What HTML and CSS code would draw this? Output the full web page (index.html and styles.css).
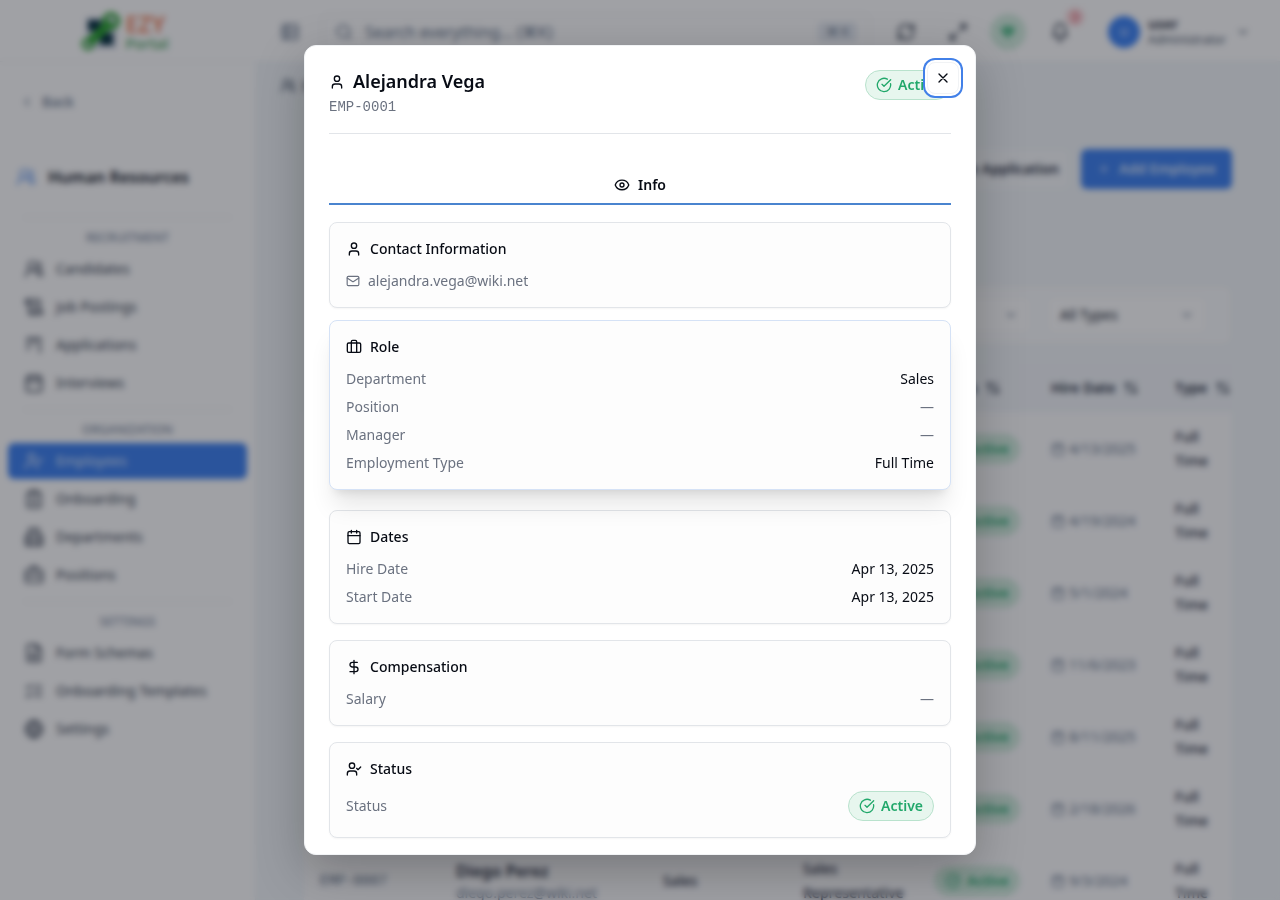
FILE: index.html
```html
<!DOCTYPE html>
<html lang="en">
<head>
<meta charset="utf-8">
<title>EZY Portal – Employees</title>
<link rel="stylesheet" href="styles.css">
</head>
<body>
<svg class="sprite" aria-hidden="true">
  <symbol id="user" viewBox="0 0 24 24"><circle cx="12" cy="7" r="4"/><path d="M19 21v-2a4 4 0 0 0-4-4H9a4 4 0 0 0-4 4v2"/></symbol>
  <symbol id="users" viewBox="0 0 24 24"><circle cx="10" cy="8" r="5"/><path d="M18 21a8 8 0 0 0-16 0"/><path d="M22 20c0-3.370-2-6.500-4-8a5 5 0 0 0-.450-8.300"/></symbol>
  <symbol id="user-check" viewBox="0 0 24 24"><circle cx="9" cy="7" r="4"/><path d="M16 21v-2a4 4 0 0 0-4-4H6a4 4 0 0 0-4 4v2"/><path d="m16 11 2 2 4-4"/></symbol>
  <symbol id="scroll" viewBox="0 0 24 24"><path d="M15 12h-5M15 8h-5M19 17V5a2 2 0 0 0-2-2H4"/><path d="M8 21h12a2 2 0 0 0 2-2v-1a1 1 0 0 0-1-1H11a1 1 0 0 0-1 1v1a2 2 0 1 1-4 0V5a2 2 0 1 0-4 0v2a1 1 0 0 0 1 1h3"/></symbol>
  <symbol id="kanban" viewBox="0 0 24 24"><path d="M4 4h16M5 4v14M12 4v8M19 4v17"/></symbol>
  <symbol id="calendar" viewBox="0 0 24 24"><path d="M8 2v4M16 2v4M3 10h18"/><rect x="3" y="4" width="18" height="18" rx="2"/></symbol>
  <symbol id="clipboard" viewBox="0 0 24 24"><rect x="8" y="2" width="8" height="4" rx="1"/><path d="M16 4h2a2 2 0 0 1 2 2v14a2 2 0 0 1-2 2H6a2 2 0 0 1-2-2V6a2 2 0 0 1 2-2h2M9 12h6M9 16h6"/></symbol>
  <symbol id="building" viewBox="0 0 24 24"><path d="M6 22V4a2 2 0 0 1 2-2h8a2 2 0 0 1 2 2v18zM6 10H4a2 2 0 0 0-2 2v8a2 2 0 0 0 2 2h16a2 2 0 0 0 2-2v-8a2 2 0 0 0-2-2h-2M10 6h4M10 10h4M10 14h4M10 18h4"/></symbol>
  <symbol id="case" viewBox="0 0 24 24"><path d="M16 6V4a2 2 0 0 0-2-2h-4a2 2 0 0 0-2 2v2M2 13h20M12 12v2"/><rect x="2" y="6" width="20" height="15" rx="2"/></symbol>
  <symbol id="luggage" viewBox="0 0 24 24"><path d="M16 20V4a2 2 0 0 0-2-2h-4a2 2 0 0 0-2 2v16"/><rect x="2" y="6" width="20" height="14" rx="2"/></symbol>
  <symbol id="file" viewBox="0 0 24 24"><path d="M15 2H6a2 2 0 0 0-2 2v16a2 2 0 0 0 2 2h12a2 2 0 0 0 2-2V7zM14 2v5h6M8 13h8M8 17h8"/></symbol>
  <symbol id="checks" viewBox="0 0 24 24"><path d="m3 17 2 2 4-4M3 7l2 2 4-4M13 6h8M13 12h8M13 18h8"/></symbol>
  <symbol id="globe" viewBox="0 0 24 24"><circle cx="12" cy="12" r="10"/><path d="M12 2a14 14 0 0 0 0 20 14 14 0 0 0 0-20M2 12h20"/></symbol>
  <symbol id="left" viewBox="0 0 24 24"><path d="m15 18-6-6 6-6"/></symbol>
  <symbol id="down" viewBox="0 0 24 24"><path d="m6 9 6 6 6-6"/></symbol>
  <symbol id="panel" viewBox="0 0 24 24"><rect x="3" y="3" width="18" height="18" rx="2"/><path d="M9 3v18M3 9h18M3 15h18"/></symbol>
  <symbol id="search" viewBox="0 0 24 24"><circle cx="11" cy="11" r="8"/><path d="m21 21-4-4"/></symbol>
  <symbol id="refresh" viewBox="0 0 24 24"><path d="M3 12a9 9 0 0 1 9-9 10 10 0 0 1 7 3l2 2M21 3v5h-5M21 12a9 9 0 0 1-9 9 10 10 0 0 1-7-3l-2-2M8 16H3v5"/></symbol>
  <symbol id="expand" viewBox="0 0 24 24"><path d="M15 3h6v6M9 21H3v-6M21 3l-7 7M3 21l7-7"/></symbol>
  <symbol id="heart" viewBox="0 0 24 24"><path fill="currentColor" d="M12 20 4 12a5 5 0 0 1 8-6 5 5 0 0 1 8 6z"/></symbol>
  <symbol id="bell" viewBox="0 0 24 24"><path d="M10 21a2 2 0 0 0 4 0M4 17h16c-1-2-2-3-2-9A6 6 0 0 0 6 8c0 6-1 7-2 9"/></symbol>
  <symbol id="plus" viewBox="0 0 24 24"><path d="M5 12h14M12 5v14"/></symbol>
  <symbol id="sort" viewBox="0 0 24 24"><path d="m3 8 4-4 4 4M7 4v16M21 16l-4 4-4-4M17 20V4"/></symbol>
  <symbol id="check-circle" viewBox="0 0 24 24"><path d="M21.800 10A10 10 0 1 1 17 3.300"/><path d="m9 11 3 3L22 4"/></symbol>
  <symbol id="eye" viewBox="0 0 24 24"><path d="M2 12.300a1 1 0 0 1 0-.700 10.750 10.750 0 0 1 20 0 1 1 0 0 1 0 .700 10.750 10.750 0 0 1-20 0"/><circle cx="12" cy="12" r="3"/></symbol>
  <symbol id="mail" viewBox="0 0 24 24"><rect x="2" y="4" width="20" height="16" rx="2"/><path d="m22 7-9 5.700a2 2 0 0 1-2 0L2 7"/></symbol>
  <symbol id="dollar" viewBox="0 0 24 24"><path d="M12 2v20M17 5H9.500a3.500 3.500 0 0 0 0 7h5a3.500 3.500 0 0 1 0 7H6"/></symbol>
  <symbol id="x" viewBox="0 0 24 24"><path d="M18 6 6 18M6 6l12 12"/></symbol>
</svg>

<div class="app" inert>
  <header class="topbar">
    <div class="brand">
      <svg class="brand-mark" viewBox="0 0 40 40" aria-hidden="true">
        <rect x="5" y="5" width="31" height="32" fill="#d3d9e6"/>
        <rect x="7" y="8" width="13" height="11" fill="#022c3c"/>
        <rect x="19" y="21" width="13" height="12" fill="#022c3c"/>
        <path d="M11 28 27 13" stroke="#27a02c" stroke-width="9" fill="none"/>
        <circle cx="30" cy="9" r="7" fill="none" stroke="#27a02c" stroke-width="4"/>
        <circle cx="7" cy="32" r="5" fill="none" stroke="#27a02c" stroke-width="3"/>
      </svg>
      <div class="brand-text"><span class="brand-ezy">EZY</span><span class="brand-portal">Portal</span></div>
    </div>
    <div class="tools">
      <button class="tool-panel" aria-label="Toggle sidebar"><svg class="i20"><use href="#panel"/></svg></button>
      <div class="search">
        <svg class="i18"><use href="#search"/></svg>
        <input type="search" aria-label="Search" placeholder="Search everything... (⌘K)">
        <kbd>⌘ K</kbd>
      </div>
      <button class="tool" aria-label="Refresh"><svg class="i20"><use href="#refresh"/></svg></button>
      <button class="tool" aria-label="Full screen"><svg class="i20"><use href="#expand"/></svg></button>
      <button class="tool tool-health" aria-label="Health"><svg class="i16"><use href="#heart"/></svg></button>
      <button class="tool tool-bell" aria-label="Notifications"><svg class="i20"><use href="#bell"/></svg><span class="count">3</span></button>
      <button class="account">
        <span class="avatar">U</span>
        <span class="who"><b>user</b><small>Administrator</small></span>
        <svg class="i14"><use href="#down"/></svg>
      </button>
    </div>
  </header>

  <div class="body">
    <nav class="sidebar">
      <a class="back" href="#"><svg class="i14"><use href="#left"/></svg>Back</a>
      <div class="module"><svg class="i20"><use href="#users"/></svg>Human Resources</div>
      <section class="group">
        <h3>Recruitment</h3>
        <a href="#"><svg class="i20"><use href="#users"/></svg>Candidates</a>
        <a href="#"><svg class="i20"><use href="#scroll"/></svg>Job Postings</a>
        <a href="#"><svg class="i20"><use href="#kanban"/></svg>Applications</a>
        <a href="#"><svg class="i20"><use href="#calendar"/></svg>Interviews</a>
      </section>
      <section class="group">
        <h3>Organization</h3>
        <a class="current" href="#"><svg class="i20"><use href="#user-check"/></svg>Employees</a>
        <a href="#"><svg class="i20"><use href="#clipboard"/></svg>Onboarding</a>
        <a href="#"><svg class="i20"><use href="#building"/></svg>Departments</a>
        <a href="#"><svg class="i20"><use href="#case"/></svg>Positions</a>
      </section>
      <section class="group">
        <h3>Settings</h3>
        <a href="#"><svg class="i20"><use href="#file"/></svg>Form Schemas</a>
        <a href="#"><svg class="i20"><use href="#checks"/></svg>Onboarding Templates</a>
        <a href="#"><svg class="i20"><use href="#globe"/></svg>Settings</a>
      </section>
    </nav>

    <main class="main">
      <div class="crumbs"><svg class="i16"><use href="#users"/></svg>Employees</div>
      <div class="page">
        <div class="actions">
          <button class="btn">Create Application</button>
          <button class="btn btn-primary"><svg class="i14"><use href="#plus"/></svg>Add Employee</button>
        </div>
        <div class="filters">
          <label class="pick"><select aria-label="Status"><option>All</option></select><svg class="i14"><use href="#down"/></svg></label>
          <label class="pick"><select aria-label="Type"><option>All Types</option></select><svg class="i14"><use href="#down"/></svg></label>
        </div>
        <table class="grid">
          <colgroup><col class="c-id"><col><col class="c-dept"><col class="c-pos"><col class="c-status"><col class="c-hire"><col class="c-type"></colgroup>
          <thead><tr>
            <th>ID</th><th>Name</th><th>Department</th><th>Position</th>
            <th>Status<svg class="i16"><use href="#sort"/></svg></th>
            <th>Hire Date<svg class="i16"><use href="#sort"/></svg></th>
            <th>Type<svg class="i16"><use href="#sort"/></svg></th>
          </tr></thead>
          <tbody>
            <tr><td class="code"></td><td></td><td></td><td></td><td><span class="pill"><svg class="i16"><use href="#check-circle"/></svg>Active</span></td><td class="date"><svg class="i16"><use href="#calendar"/></svg>4/13/2025</td><td>Full Time</td></tr>
            <tr><td class="code"></td><td></td><td></td><td></td><td><span class="pill"><svg class="i16"><use href="#check-circle"/></svg>Active</span></td><td class="date"><svg class="i16"><use href="#calendar"/></svg>4/19/2024</td><td>Full Time</td></tr>
            <tr><td class="code"></td><td></td><td></td><td></td><td><span class="pill"><svg class="i16"><use href="#check-circle"/></svg>Active</span></td><td class="date"><svg class="i16"><use href="#calendar"/></svg>5/1/2024</td><td>Full Time</td></tr>
            <tr><td class="code"></td><td></td><td></td><td></td><td><span class="pill"><svg class="i16"><use href="#check-circle"/></svg>Active</span></td><td class="date"><svg class="i16"><use href="#calendar"/></svg>11/6/2023</td><td>Full Time</td></tr>
            <tr><td class="code"></td><td></td><td></td><td></td><td><span class="pill"><svg class="i16"><use href="#check-circle"/></svg>Active</span></td><td class="date"><svg class="i16"><use href="#calendar"/></svg>8/11/2025</td><td>Full Time</td></tr>
            <tr><td class="code"></td><td></td><td></td><td></td><td><span class="pill"><svg class="i16"><use href="#check-circle"/></svg>Active</span></td><td class="date"><svg class="i16"><use href="#calendar"/></svg>2/18/2026</td><td>Full Time</td></tr>
            <tr><td class="code">EMP-0007</td><td><b>Diego Perez</b><small>diego.perez@wiki.net</small></td><td>Sales</td><td>Sales Representative</td><td><span class="pill"><svg class="i16"><use href="#check-circle"/></svg>Active</span></td><td class="date"><svg class="i16"><use href="#calendar"/></svg>9/3/2024</td><td>Full Time</td></tr>
          </tbody>
        </table>
      </div>
    </main>
  </div>
</div>

<div class="overlay">
  <div class="dialog" role="dialog" aria-modal="true" aria-labelledby="dialog-title">
    <header class="dialog-head">
      <div>
        <h2 id="dialog-title"><svg class="i16"><use href="#user"/></svg>Alejandra Vega</h2>
        <p class="emp-code">EMP-0001</p>
      </div>
      <span class="pill"><svg class="i16"><use href="#check-circle"/></svg>Active</span>
    </header>
    <button class="close" aria-label="Close"><svg class="i16"><use href="#x"/></svg></button>

    <div class="tabs" role="tablist">
      <button class="tab" role="tab" aria-selected="true"><svg class="i16"><use href="#eye"/></svg>Info</button>
    </div>

    <div class="cards">
      <section class="card">
        <h3><svg class="i16"><use href="#user"/></svg>Contact Information</h3>
        <p class="mail"><svg class="i14"><use href="#mail"/></svg>alejandra.vega@wiki.net</p>
      </section>
      <section class="card card-raised">
        <h3><svg class="i16"><use href="#luggage"/></svg>Role</h3>
        <dl>
          <div><dt>Department</dt><dd>Sales</dd></div>
          <div><dt>Position</dt><dd class="none">—</dd></div>
          <div><dt>Manager</dt><dd class="none">—</dd></div>
          <div><dt>Employment Type</dt><dd>Full Time</dd></div>
        </dl>
      </section>
      <section class="card">
        <h3><svg class="i16"><use href="#calendar"/></svg>Dates</h3>
        <dl>
          <div><dt>Hire Date</dt><dd>Apr 13, 2025</dd></div>
          <div><dt>Start Date</dt><dd>Apr 13, 2025</dd></div>
        </dl>
      </section>
      <section class="card">
        <h3><svg class="i16"><use href="#dollar"/></svg>Compensation</h3>
        <dl>
          <div><dt>Salary</dt><dd class="none">—</dd></div>
        </dl>
      </section>
      <section class="card">
        <h3><svg class="i16"><use href="#user-check"/></svg>Status</h3>
        <dl>
          <div><dt>Status</dt><dd><span class="pill"><svg class="i16"><use href="#check-circle"/></svg>Active</span></dd></div>
        </dl>
      </section>
    </div>
  </div>
</div>
</body>
</html>
```
FILE: styles.css
```css
* { box-sizing: border-box; margin: 0; }

:root {
  --ink: #070b14;
  --muted: #6b7280;
  --line: #e2e5e9;
  --green: #22a86b;
}

body {
  font: 14px/20px "Noto Sans", "DejaVu Sans", sans-serif;
  color: var(--ink);
}

button, input, select { font: inherit; color: inherit; border: 0; background: none; padding: 0; }
a { color: inherit; text-decoration: none; }
svg { fill: none; stroke: currentColor; stroke-width: 2; stroke-linecap: round; stroke-linejoin: round; flex: none; }

.sprite { position: absolute; width: 0; height: 0; }
.i14 { width: 14px; height: 14px; }
.i16 { width: 16px; height: 16px; }
.i18 { width: 18px; height: 18px; }
.i20 { width: 20px; height: 20px; }

/* Application shell */
.app { display: flex; flex-direction: column; height: 100vh; overflow: hidden; background: #f3f7fa; }
.topbar { display: flex; flex: none; height: 62px; padding-top: 2px; background: #fff; border-bottom: 1px solid #f1f3f5; }
.brand { display: flex; flex: none; align-items: center; justify-content: center; gap: 4px; width: 256px; padding-right: 6px; }
.brand-mark { width: 40px; height: 40px; stroke: none; }
.brand-text { display: flex; flex-direction: column; font-weight: 600; }
.brand-ezy { font-size: 23px; line-height: 22px; color: #f0825c; }
.brand-portal { font-size: 15px; line-height: 16px; font-weight: 500; color: #3f9b55; }

.tools { display: flex; flex: 1; align-items: center; gap: 12px; padding: 0 30px 0 24px; }
.tool-panel { display: grid; width: 20px; color: #64748b; margin-right: 10px; }
.search { display: flex; flex: 1; align-items: center; gap: 12px; height: 38px; margin-right: 4px; padding: 0 12px; border: 1px solid #edf0f3; border-radius: 8px; color: #64748b; }
.search input { flex: 1; min-width: 0; font-size: 16px; }
.search input::placeholder { color: #64748b; }
.search kbd { padding: 2px 8px; border-radius: 4px; background: #e6ebf2; font: 12px/16px "Noto Sans", "DejaVu Sans", sans-serif; }
.tool { display: grid; place-items: center; width: 40px; height: 40px; color: #1e293b; }
.tool-health { width: 36px; height: 36px; border-radius: 50%; background: #d3eedf; color: #55bd8a; }
.tool-bell { position: relative; margin-left: 2px; }
.count { position: absolute; top: -4px; right: -4px; width: 18px; height: 18px; border-radius: 9px; background: #fbd0d4; color: #d4344b; font-size: 11px; line-height: 18px; }
.account { display: flex; align-items: center; gap: 8px; margin-left: 16px; text-align: left; color: #475569; }
.avatar { display: grid; place-items: center; width: 32px; height: 32px; border-radius: 50%; background: #3b82f6; color: #fff; font-size: 11px; }
.who { display: grid; line-height: 16px; }
.who b { font-weight: 600; color: #1e293b; }
.who small { font-size: 12px; margin-right: 2px; }

.body { display: flex; flex: 1; min-height: 0; }
.sidebar { flex: none; width: 256px; padding: 30px 8px; background: #fff; border-right: 1px solid #f1f3f5; color: #333c4d; font-weight: 400; overflow: hidden; }
.back { display: flex; align-items: center; gap: 8px; padding-left: 12px; color: #64748b; font-weight: 500; }
.module { display: flex; align-items: center; gap: 12px; margin: 53px 0 28px; padding-left: 8px; font-size: 16px; line-height: 24px; font-weight: 600; color: #0b1120; }
.module svg { color: #5b93ee; }
.group { display: grid; gap: 2px; margin-bottom: 8px; }
.group h3 { margin: 0 16px 3px; padding-top: 12px; border-top: 1px solid #eaecef; font-size: 12px; line-height: 16px; font-weight: 500; text-transform: uppercase; text-align: center; color: #7c8aa0; }
.group a { display: flex; align-items: center; gap: 12px; height: 36px; padding-left: 16px; border-radius: 6px; }
.group .current { background: #3b7ff0; color: #dbe8fd; }

.main { flex: 1; min-width: 0; padding: 14px 24px 0; overflow: hidden; }
.crumbs { display: flex; align-items: center; gap: 6px; color: #475569; }
.page { padding: 53px 24px 0; }
.actions { display: flex; justify-content: flex-end; gap: 12px; }
.btn { display: flex; align-items: center; gap: 8px; height: 40px; padding: 0 10px; border-radius: 6px; background: #f8fafc; font-weight: 600; color: #1e293b; }
.btn-primary { padding: 0 16px; background: #3b7ff0; color: #dbe8fd; }
.filters { display: flex; justify-content: flex-end; gap: 16px; margin-top: 96px; padding: 10px 24px; border: 1px solid #eceff3; border-radius: 8px; background: #fbfcfd; }
.pick { display: flex; align-items: center; width: 160px; height: 38px; padding: 0 12px; border: 1px solid #f1f3f5; border-radius: 6px; background: #fff; color: #0f172a; }
.pick select { flex: 1; appearance: none; }
.pick svg { color: #64748b; }
.grid { width: 100%; margin-top: 19px; table-layout: fixed; border-collapse: collapse; background: #fdfdfe; color: #1e293b; }
.c-id { width: 136px; }
.c-dept { width: 140px; }
.c-pos { width: 131px; }
.c-status { width: 117px; }
.c-hire { width: 124px; }
.c-type { width: 73px; }
.grid th { height: 48px; padding: 0 0 0 16px; background: #f3f6fa; text-align: left; font-weight: 600; white-space: nowrap; }
.grid th svg { margin-left: 8px; vertical-align: -3px; }
.grid td { height: 72px; padding: 2px 0 0 16px; line-height: 24px; font-weight: 500; }
.grid .code, .grid .date { color: #64748b; font-weight: 400; }
.grid .code { font-family: "Liberation Mono", monospace; }
.grid .date { white-space: nowrap; }
.grid .date svg { width: 14px; height: 14px; margin-right: 4px; vertical-align: -2px; }
.grid td b { display: block; font-size: 16px; font-weight: 600; line-height: 24px; }
.grid td small { display: block; font-size: 14px; line-height: 20px; font-weight: 400; color: #64748b; }
.grid .pill { background: #d3eedf; border-color: #cdebdb; }

.pill { display: inline-flex; align-items: center; gap: 6px; padding: 4px 10px; border: 1px solid #b9e2cd; border-radius: 15px; background: #e7f6ee; color: var(--green); line-height: 20px; font-weight: 600; }

/* Employee dialog */
.overlay { position: fixed; inset: 0; display: grid; place-items: center; padding: 16px; background: rgba(18, 19, 30, 0.4); backdrop-filter: blur(3px); }
.dialog { position: relative; width: 100%; max-width: 672px; max-height: 90vh; padding: 24px 24px 16px; overflow: hidden; border: 1px solid #f1f3f5; border-radius: 12px; background: #fff; box-shadow: 0 16px 48px rgba(0, 0, 0, 0.25); }
.dialog-head { display: flex; align-items: flex-start; justify-content: space-between; padding-bottom: 16px; border-bottom: 1px solid var(--line); }
.dialog-head h2 { display: flex; align-items: center; gap: 8px; font-size: 18px; line-height: 23px; font-weight: 600; }
.emp-code { margin-top: 4px; font-family: "Liberation Mono", monospace; color: var(--muted); }
.close { position: absolute; top: 16px; right: 16px; display: grid; place-items: center; width: 32px; height: 32px; border: 1px solid #f1f3f5; border-radius: 8px; background: #fff; box-shadow: 0 0 0 2px #fff, 0 0 0 4px #4280e8; }
.tabs { display: grid; margin: 33px 0 17px; }
.tab { display: flex; align-items: center; justify-content: center; gap: 8px; padding: 8px; border-bottom: 2px solid #4a84cf; font-weight: 600; }
.cards { display: grid; gap: 16px; }
.card { padding: 16px; border: 1px solid var(--line); border-radius: 8px; background: #fdfdfd; box-shadow: 0 1px 2px rgba(0, 0, 0, 0.04); }
.card-raised { transform: translateY(-4px); border-color: #d5e2f6; box-shadow: 0 20px 25px -5px rgba(0, 0, 0, 0.1), 0 8px 10px -6px rgba(0, 0, 0, 0.1); }
.card h3 { display: flex; align-items: center; gap: 8px; margin-bottom: 12px; font-size: 14px; font-weight: 500; }
.mail { display: flex; align-items: center; gap: 8px; color: var(--muted); }
.card dl { display: grid; gap: 8px; }
.card dl div { display: flex; align-items: center; justify-content: space-between; }
.card dt, .card .none { color: var(--muted); }
.card dd { display: flex; }
```
